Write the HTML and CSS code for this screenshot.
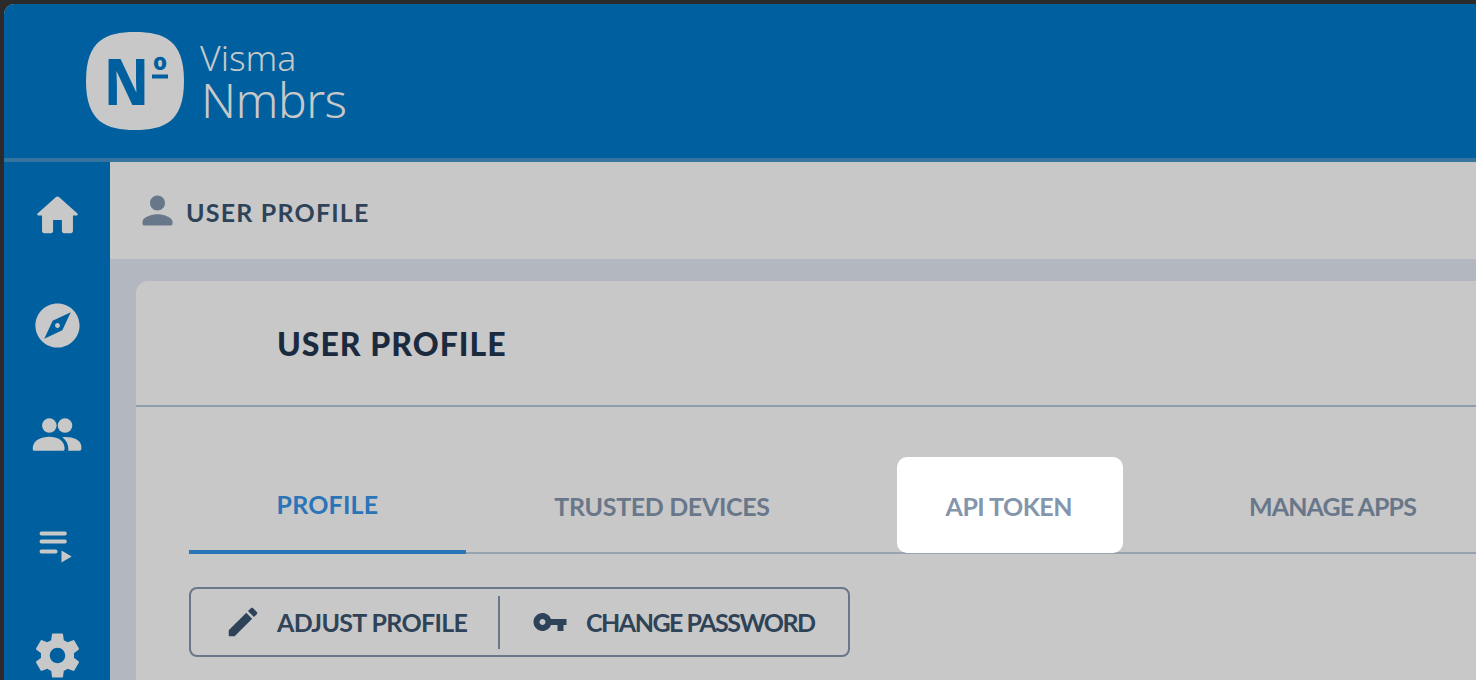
FILE: index.html
```html
<!DOCTYPE html>
<html lang="en">
<head>
<meta charset="utf-8">
<title>User profile</title>
<link rel="stylesheet" href="styles.css">
</head>
<body>
<div class="app">
  <header class="topbar">
    <svg class="logo-mark" viewBox="0 0 98 98" aria-hidden="true">
      <path class="logo-bg" d="M49 0C78 0 98 8 98 49S78 98 49 98 0 90 0 49 20 0 49 0Z"/>
      <text class="logo-n" x="18" y="73" textLength="45" lengthAdjust="spacingAndGlyphs">N</text>
      <text class="logo-o" x="67" y="51">º</text>
      <rect class="logo-fill" x="66" y="42.500" width="16" height="4"/>
    </svg>
    <div class="brand">
      <span class="brand-top">Visma</span>
      <span class="brand-main">Nmbrs</span>
    </div>
  </header>
  <div class="body">
    <nav class="sidebar">
      <a class="nav-item"><svg class="nav-icon" viewBox="0 0 24 24"><path d="M10 19v-5h4v5c0 .55.45 1 1 1h3c.55 0 1-.45 1-1v-7h1.700c.46 0 .68-.57.33-.87L12.670 3.600c-.38-.34-.96-.34-1.340 0l-8.360 7.530c-.34.3-.13.87.33.87H5v7c0 .55.45 1 1 1h3c.55 0 1-.45 1-1z"/></svg></a>
      <a class="nav-item"><svg class="nav-icon" viewBox="0 0 24 24"><path d="M12 10.900c-.61 0-1.100.49-1.100 1.100s.49 1.100 1.100 1.100c.61 0 1.100-.49 1.100-1.100s-.49-1.100-1.100-1.100zM12 2C6.480 2 2 6.480 2 12s4.480 10 10 10 10-4.480 10-10S17.520 2 12 2zm2.190 12.190L6 18l3.810-8.190L18 6l-3.810 8.190z"/></svg></a>
      <a class="nav-item"><svg class="nav-icon" viewBox="0 0 24 24"><circle cx="8.300" cy="7.500" r="3.300"/><circle cx="15.400" cy="7.500" r="3.300"/><path d="M.8 18.200c0-.3 0-1 .1-1.300.5-2.700 3.700-4.300 7.400-4.300s6.400 1.700 6.800 4.300c.1.4.1 1 .1 1.300 0 .4-.3.7-.7.7H1.500c-.4 0-.7-.3-.7-.7z"/><path d="M16.800 18.900c.1-.3.1-.5.1-.8 0-2-.9-3.900-2.700-5.300 3.900-.5 7.900.9 8.500 3.500.1.500.1 1.300.1 1.700 0 .5-.3.9-.8.9z"/></svg></a>
      <a class="nav-item"><svg class="nav-icon" viewBox="0 0 24 24"><path d="M4.700 5.700h10.700c.45 0 .8.4.8.9s-.35.9-.8.9H4.700c-.45 0-.8-.4-.8-.9s.35-.9.8-.9zM4.700 9.300h10.700c.45 0 .8.4.8.9s-.35.9-.8.9H4.700c-.45 0-.8-.4-.8-.9s.35-.9.8-.9zM4.700 13.800h6.500c.45 0 .8.4.8.9s-.35.9-.8.9H4.700c-.45 0-.8-.4-.8-.9s.35-.9.8-.9zM13.800 14.300v5.400l4.600-2.700z"/></svg></a>
      <a class="nav-item"><svg class="nav-icon" viewBox="0 0 24 24"><path d="M19.430 12.980c.04-.32.07-.64.07-.98s-.03-.66-.07-.98l2.110-1.650c.19-.15.24-.42.12-.64l-2-3.460c-.12-.22-.39-.3-.61-.22l-2.490 1c-.52-.4-1.080-.73-1.690-.98l-.38-2.650C14.460 2.180 14.250 2 14 2h-4c-.25 0-.46.18-.49.42l-.38 2.650c-.61.25-1.170.59-1.690.98l-2.490-1c-.23-.09-.49 0-.61.22l-2 3.460c-.13.22-.07.49.12.64l2.110 1.650c-.04.32-.07.65-.07.98s.03.66.07.98l-2.110 1.650c-.19.15-.24.42-.12.64l2 3.460c.12.22.39.3.61.22l2.490-1c.52.4 1.080.73 1.690.98l.38 2.650c.03.24.24.42.49.42h4c.25 0 .46-.18.49-.42l.38-2.650c.61-.25 1.170-.59 1.690-.98l2.490 1c.23.09.49 0 .61-.22l2-3.460c.12-.22.07-.49-.12-.64l-2.110-1.650zM12 15.500c-1.930 0-3.500-1.570-3.500-3.500s1.570-3.500 3.500-3.500 3.500 1.570 3.500 3.500-1.570 3.500-3.500 3.500z"/></svg></a>
    </nav>
    <main class="main">
      <div class="crumb">
        <svg class="crumb-icon" viewBox="0 0 24 24"><path d="M12 12c2.210 0 4-1.790 4-4s-1.790-4-4-4-4 1.790-4 4 1.790 4 4 4zm0 2c-2.670 0-8 1.340-8 4v1c0 .55.45 1 1 1h14c.55 0 1-.45 1-1v-1c0-2.660-5.330-4-8-4z"/></svg>
        <span class="crumb-text">USER PROFILE</span>
      </div>
      <div class="content">
        <section class="card">
          <h1 class="card-title">USER PROFILE</h1>
          <div class="card-body">
            <div class="tabs">
              <a class="tab tab-active">PROFILE</a>
              <a class="tab tab-trusted">TRUSTED DEVICES</a>
              <a class="tab tab-hover">API TOKEN</a>
              <a class="tab tab-apps">MANAGE APPS</a>
            </div>
            <div class="actions">
              <button class="action action-first"><svg class="action-icon" viewBox="0 0 24 24"><path d="M3 17.250V21h3.750L17.810 9.940l-3.750-3.750L3 17.250zM20.710 7.040c.39-.39.39-1.020 0-1.410l-2.340-2.340c-.39-.39-1.020-.39-1.410 0l-1.830 1.830 3.750 3.750 1.830-1.830z"/></svg>ADJUST PROFILE</button>
              <span class="action-divider"></span>
              <button class="action action-last"><svg class="action-icon key" viewBox="0 0 24 24"><path d="M12.650 10C11.830 7.670 9.610 6 7 6c-3.310 0-6 2.690-6 6s2.690 6 6 6c2.610 0 4.830-1.670 5.650-4H17v4h4v-4h2v-4H12.650zM7 14c-1.100 0-2-.9-2-2s.9-2 2-2 2 .9 2 2-.9 2-2 2z"/></svg>CHANGE PASSWORD</button>
            </div>
          </div>
        </section>
      </div>
    </main>
  </div>
</div>
</body>
</html>
```
FILE: styles.css
```css
* { box-sizing: border-box; }
html, body { margin: 0; height: 680px; overflow: hidden; }
body { background: #2b2b2b; padding: 4px 0 0 4px; font-family: "Lato", "Noto Sans", sans-serif; }
.app { height: 676px; border-top-left-radius: 10px; overflow: hidden; display: flex; flex-direction: column; background: #b3b8c0; }
.topbar { height: 158px; flex: none; background: #00609f; border-bottom: 4px solid #36759f; display: flex; align-items: flex-start; padding: 28px 0 0 82px; }
.logo-mark { width: 98px; height: 98px; flex: none; }
.logo-bg { fill: #c8c8c8; }
.logo-fill { fill: #00609f; }
.logo-n { font-family: "Noto Sans", sans-serif; font-weight: 800; font-size: 65px; fill: #00609f; }
.logo-o { font-family: "Noto Sans", sans-serif; font-weight: 800; font-size: 36px; fill: #00609f; }
.brand { display: flex; flex-direction: column; margin-left: 16px; color: #c8c8c8; font-family: "Noto Sans", sans-serif; font-weight: 300; }
.brand-top { font-size: 35.500px; line-height: 40px; margin-top: 5px; }
.brand-main { font-size: 48px; line-height: 45px; margin-left: 1px; letter-spacing: -.5px; }
.body { flex: 1; display: flex; min-height: 0; }
.sidebar { width: 106px; flex: none; background: #00609f; display: flex; flex-direction: column; gap: 4px; }
.nav-item { height: 106px; flex: none; display: flex; align-items: center; justify-content: center; }
.nav-icon { width: 53px; height: 53px; fill: #c8c8c8; }
.main { flex: 1; min-width: 0; display: flex; flex-direction: column; }
.crumb { height: 97px; flex: none; background: #c8c8c8; display: flex; align-items: center; padding-left: 25px; }
.crumb-icon { width: 45px; height: 45px; fill: #69778a; flex: none; margin-top: -1px; }
.crumb-text { margin: 2px 0 0 6px; font-size: 25px; font-weight: 700; letter-spacing: 1.200px; color: #2f4358; white-space: nowrap; }
.content { flex: 1; padding: 22px 0 0 26px; min-height: 0; }
.card { height: 100%; background: #c8c8c8; border-top-left-radius: 12px; }
.card-title { margin: 0; height: 126px; border-bottom: 2px solid #909dac; padding-left: 141px; display: flex; align-items: center; font-size: 32px; font-weight: 900; letter-spacing: 1px; color: #1a2b40; white-space: nowrap; }
.card-body { padding: 50px 0 0 53px; }
.tabs { display: flex; align-items: flex-start; height: 97px; border-bottom: 2px solid #97a3b1; }
.tab { height: 95px; flex: none; display: flex; align-items: center; justify-content: center; padding: 2px 88px 0; font-size: 25px; font-weight: 700; color: #69778a; white-space: nowrap; }
.tab-active { height: 97px; color: #2a74b8; border-bottom: 4px solid #2a74b8; padding: 0 88px 0 87.500px; letter-spacing: .2px; }
.tab-trusted { letter-spacing: -.35px; }
.tab-hover { height: 96px; background: #fff; color: #8496ab; border-radius: 10px; padding: 2px 51px 0 49px; margin: 0 39px; letter-spacing: -.5px; }
.tab-apps { padding-left: 87px; letter-spacing: -.9px; }
.actions { margin-top: 33px; width: 661px; height: 70px; border: 2px solid #69778a; border-radius: 8px; display: flex; align-items: center; }
.action { appearance: none; border: 0; background: none; padding: 0; height: 100%; display: flex; align-items: center; font: 700 25px "Lato", "Noto Sans", sans-serif; color: #2f4358; white-space: nowrap; }
.action-first { width: 307px; padding-left: 33px; letter-spacing: -.65px; }
.action-first .action-icon { margin-right: 15px; }
.action-last { flex: 1; padding-left: 32px; letter-spacing: -1.5px; }
.action-icon { width: 38px; height: 38px; fill: #2f4358; margin-right: 16px; flex: none; }
.key { width: 36px; height: 36px; margin-right: 18px; }
.action-divider { width: 2px; height: 53px; background: #69778a; flex: none; }
```
